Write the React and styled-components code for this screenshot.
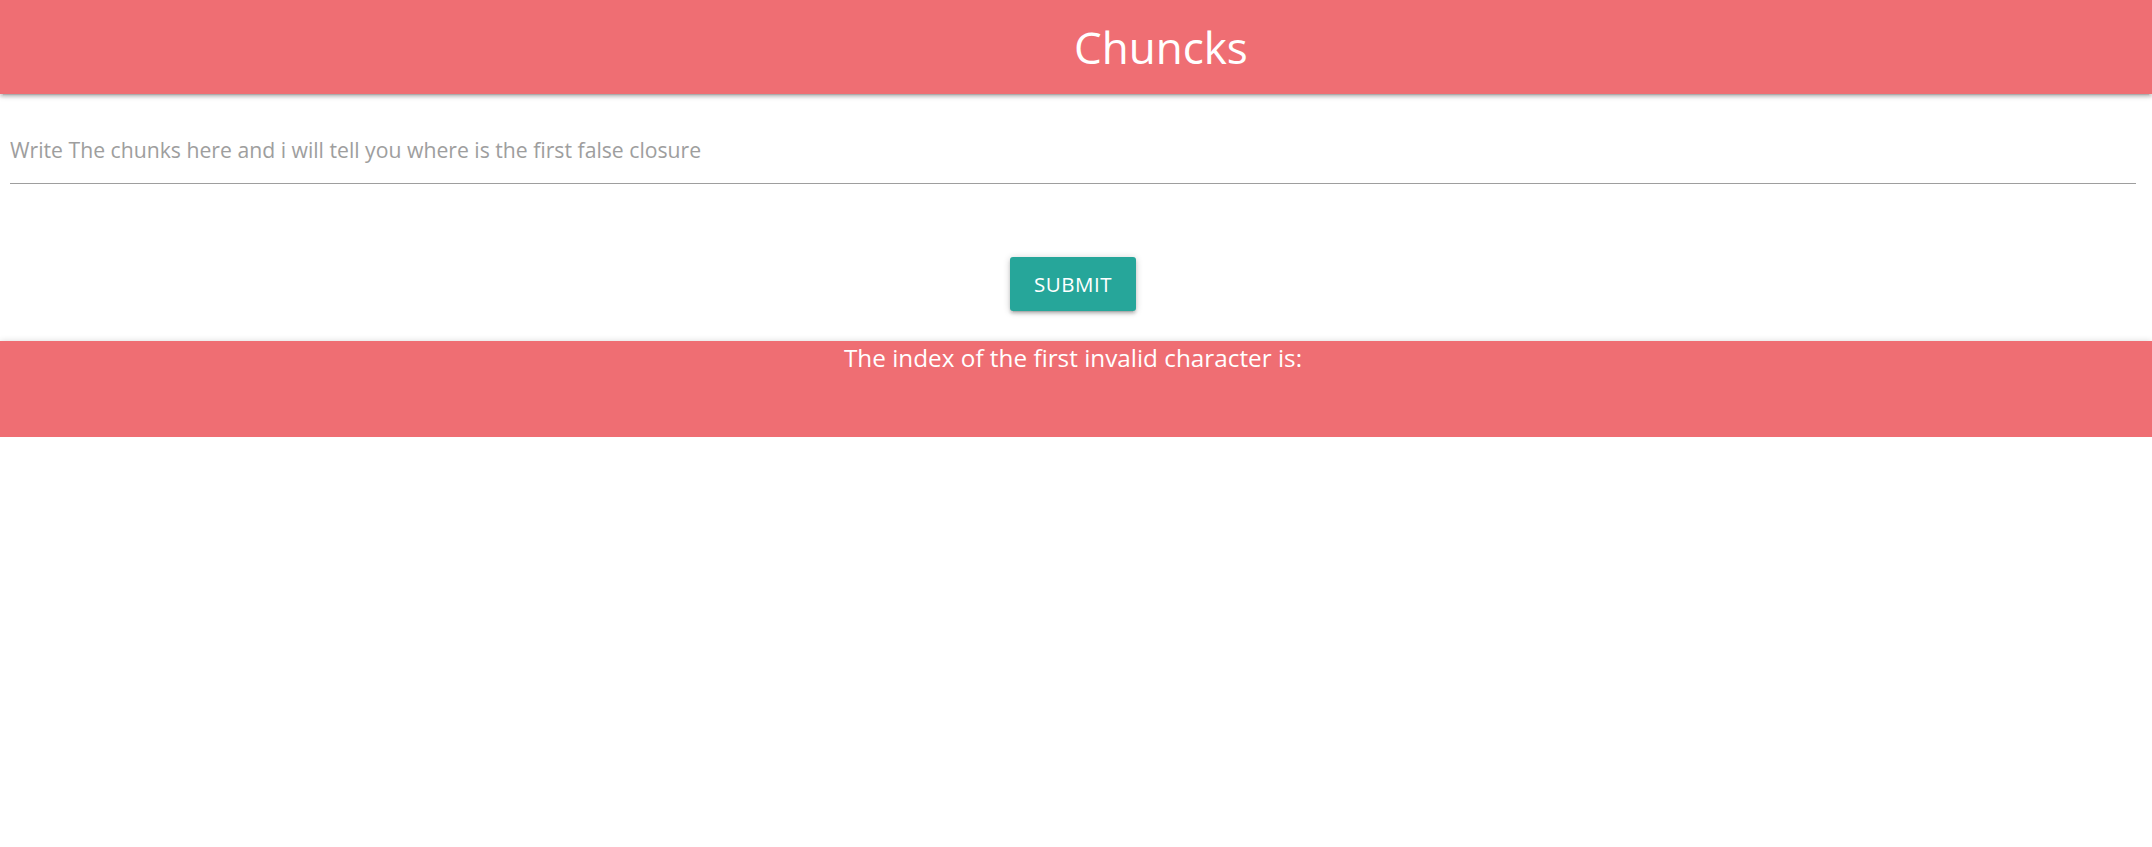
import React from "react";
import styled, { createGlobalStyle } from "styled-components";

const Global = createGlobalStyle`
  html, body { margin: 0; padding: 0; background: #fff; }
  body { font-family: "Open Sans", "Noto Sans", sans-serif; }
  * { box-sizing: border-box; }
`;

const depth = `0 3px 3px 0 rgba(0,0,0,0.14), 0 4px 1px -3px rgba(0,0,0,0.12), 0 1px 7px 0 rgba(0,0,0,0.2)`;

const Header = styled.header`
  position: relative;
  z-index: 2;
  height: 94px;
  background: #ef6e73;
  box-shadow: ${depth};
  display: flex;
  align-items: center;
  padding-left: calc(50% - 2px);
`;

const Title = styled.h1`
  margin: 0;
  font-weight: 400;
  font-size: 44px;
  color: #fff;
  line-height: 1;
`;

const Form = styled.form`
  padding: 0 16px 0 10px;
  display: flex;
  flex-direction: column;
`;

const Input = styled.input`
  margin-top: 28px;
  height: 62px;
  padding: 0 0 6px 0;
  border: none;
  border-bottom: 1px solid #9e9e9e;
  outline: none;
  font-family: "Open Sans", "Noto Sans", sans-serif;
  font-size: 21.2px;
  background: transparent;
  &::placeholder { color: #9e9e9e; }
`;

const ButtonRow = styled.div`
  display: flex;
  justify-content: center;
  padding: 73px 6px 30px 0;
`;

const Button = styled.button`
  width: 126px;
  height: 54px;
  border: none;
  border-radius: 3px;
  background: #26a69a;
  color: #fff;
  font-family: "Open Sans", "Noto Sans", sans-serif;
  font-size: 20.5px;
  letter-spacing: 0.5px;
  text-transform: uppercase;
  box-shadow: ${depth};
  cursor: pointer;
`;

const Result = styled.section`
  height: 96px;
  background: #ef6e73;
  box-shadow: ${depth};
  text-align: center;
  padding-right: 6px;
  padding-top: 2px;
`;

const ResultText = styled.p`
  margin: 0;
  color: #fff;
  font-size: 24.3px;
  line-height: 30px;
`;

export default function App() {
  return (
    <>
      <Global />
      <Header>
        <Title>Chuncks</Title>
      </Header>
      <Form onSubmit={(e) => e.preventDefault()}>
        <Input placeholder="Write The chunks here and i will tell you where is the first false closure" />
      </Form>
      <ButtonRow>
        <Button type="button">Submit</Button>
      </ButtonRow>
      <Result>
        <ResultText>The index of the first invalid character is:</ResultText>
      </Result>
    </>
  );
}
